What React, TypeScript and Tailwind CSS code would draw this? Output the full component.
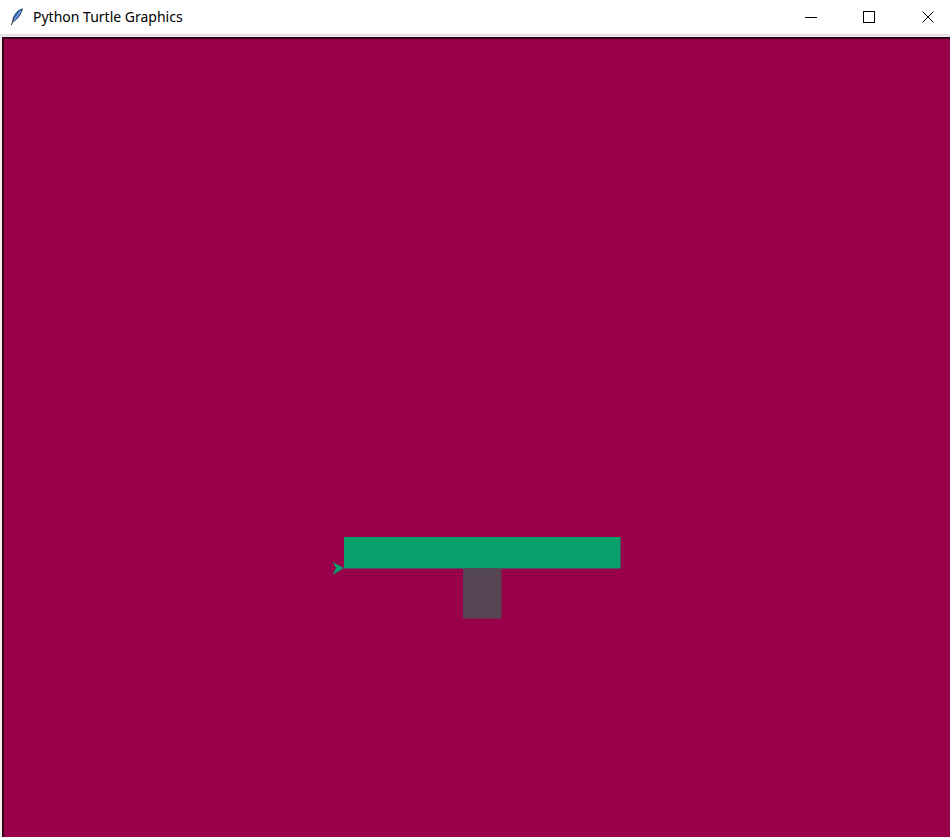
export default function App() {
  return (
    <div className="flex flex-col h-[837px] w-[950px] overflow-hidden bg-white">
      {/* title bar */}
      <div className="flex items-center h-[34px] bg-white shrink-0">
        <div className="flex items-center pl-[10px] gap-[9px]">
          <svg width="14" height="18" viewBox="0 0 14 18">
            <path
              d="M12.5 0.8 C8.5 1.8 4.5 5.5 3 11 L2.5 14 L4 13 C8 11 11 6 12.5 0.8 Z"
              fill="#3b6fb6"
              stroke="#1d3557"
              strokeWidth="0.8"
            />
            <path d="M3 13 L1.3 17" stroke="#444" strokeWidth="1.1" />
            <path d="M11 3 L4.5 11.5" stroke="#a9c8ef" strokeWidth="0.8" />
          </svg>
          <span className="text-[14px] text-black font-['Noto_Sans',sans-serif] leading-none">
            Python Turtle Graphics
          </span>
        </div>
        <div className="ml-auto flex items-center h-full pr-[16px]">
          <div className="w-[12px] h-px bg-black" />
          <div className="ml-[46px] w-[12px] h-[12px] border border-black" />
          <svg className="ml-[47px]" width="12" height="12" viewBox="0 0 12 12">
            <path d="M0.5 0.5 L11.5 11.5 M11.5 0.5 L0.5 11.5" stroke="#000" strokeWidth="1" />
          </svg>
        </div>
      </div>
      <div className="h-[2px] bg-[#e3e3e3] shrink-0" />
      {/* canvas */}
      <div className="flex-1 flex bg-[#f0f0f0] pl-[2px] pt-[1px]">
        <div className="relative flex-1 border-l-2 border-t-2 border-[#33001a] bg-[#99004a] overflow-hidden">
          <svg className="absolute inset-0 w-full h-full">
            <g transform="translate(-4 -39)">
              <rect x="344" y="537" width="276.5" height="31.5" fill="#08a06a" />
              <rect x="463" y="568.5" width="38.5" height="50" fill="#564653" />
              <polygon points="344,568 332.5,562 336,568 332.5,575" fill="#08a06a" />
            </g>
          </svg>
        </div>
      </div>
    </div>
  );
}
